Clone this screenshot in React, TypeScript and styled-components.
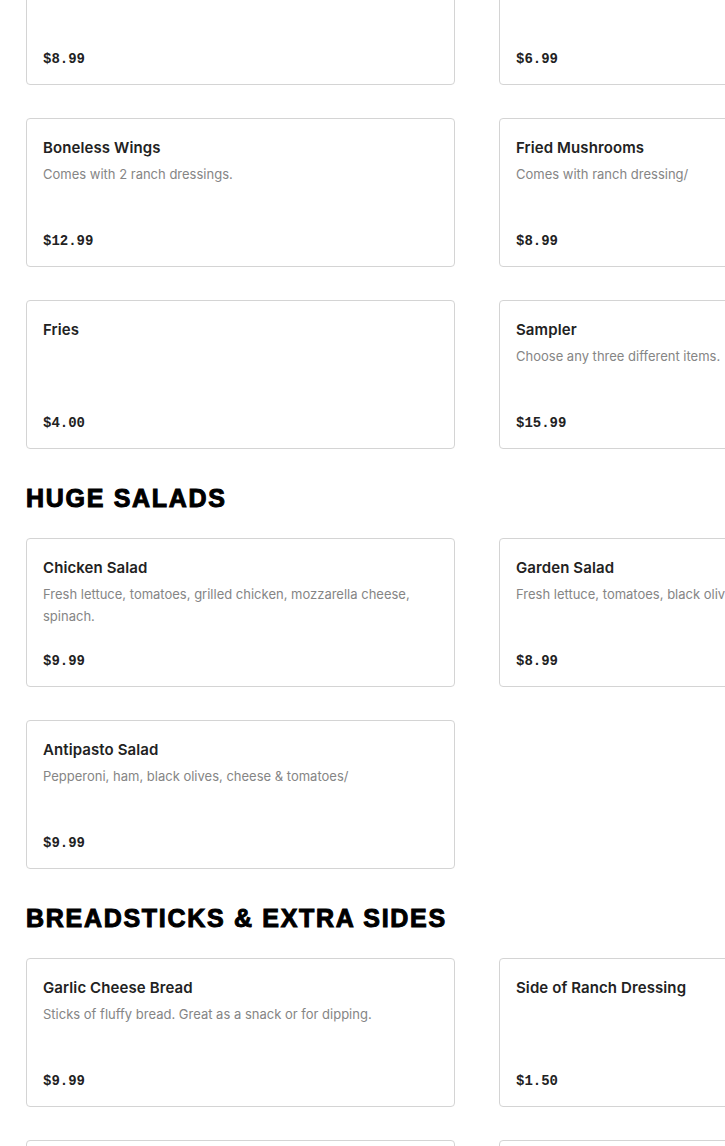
import styled, { createGlobalStyle } from "styled-components";

const GlobalStyle = createGlobalStyle`
  html, body {
    margin: 0;
    padding: 0;
    background: #fff;
  }
  body {
    font-family: Inter, "Liberation Sans", sans-serif;
    color: #222;
  }
`;

const Page = styled.div`
  width: 100vw;
  height: 1146px;
  overflow: hidden;
`;

// the page is seen scrolled part-way down the menu
const Menu = styled.main`
  margin-top: -64px;
  padding-left: 26px;
`;

const Section = styled.section``;

const SectionTitle = styled.h2`
  margin: 34px 0 25px;
  font-family: "Liberation Sans", Arial, sans-serif;
  font-size: 25px;
  line-height: 30px;
  font-weight: 900;
  letter-spacing: 1.7px;
  -webkit-text-stroke: 1px #000;
  color: #000;
  text-transform: uppercase;
  white-space: nowrap;
`;

const Grid = styled.div`
  display: grid;
  grid-template-columns: repeat(2, 429px);
  column-gap: 44px;
  row-gap: 33px;
`;

const Card = styled.article`
  box-sizing: border-box;
  height: 149px;
  display: flex;
  flex-direction: column;
  padding: 18px 16px 14px;
  border: 1px solid #d4d4d4;
  border-radius: 4px;
  background: #fff;
`;

const ItemName = styled.h3`
  margin: 0;
  font-size: 15px;
  line-height: 22px;
  font-weight: 600;
  letter-spacing: 0.1px;
  color: #222;
  white-space: nowrap;
`;

const ItemDesc = styled.p`
  margin: 4px 0 0;
  font-size: 13px;
  line-height: 22px;
  color: #858585;
`;

const Price = styled.span`
  margin-top: auto;
  font-family: "Liberation Mono", "DejaVu Sans Mono", monospace;
  font-size: 14px;
  line-height: 22px;
  font-weight: 700;
  color: #222;
`;

type Item = { name: string; desc?: string; price: string };
type MenuSection = { title?: string; items: Item[] };

const sections: MenuSection[] = [
  {
    items: [
      { name: "Mozzarella Sticks", price: "$8.99" },
      { name: "Onion Rings", desc: "Comes with marinara sauce on the side.", price: "$6.99" },
      { name: "Boneless Wings", desc: "Comes with 2 ranch dressings.", price: "$12.99" },
      { name: "Fried Mushrooms", desc: "Comes with ranch dressing/", price: "$8.99" },
      { name: "Fries", price: "$4.00" },
      { name: "Sampler", desc: "Choose any three different items.", price: "$15.99" },
    ],
  },
  {
    title: "Huge Salads",
    items: [
      {
        name: "Chicken Salad",
        desc: "Fresh lettuce, tomatoes, grilled chicken, mozzarella cheese, spinach.",
        price: "$9.99",
      },
      { name: "Garden Salad", desc: "Fresh lettuce, tomatoes, black olives, cucumbers.", price: "$8.99" },
      { name: "Antipasto Salad", desc: "Pepperoni, ham, black olives, cheese & tomatoes/", price: "$9.99" },
    ],
  },
  {
    title: "Breadsticks & Extra Sides",
    items: [
      { name: "Garlic Cheese Bread", desc: "Sticks of fluffy bread. Great as a snack or for dipping.", price: "$9.99" },
      { name: "Side of Ranch Dressing", price: "$1.50" },
      { name: "Breadsticks", desc: "Served with marinara sauce.", price: "$5.99" },
      { name: "Side of Marinara", price: "$1.00" },
    ],
  },
];

const App = () => {
  return (
    <Page>
      <GlobalStyle />
      <Menu>
        {sections.map((section, i) => (
          <Section key={i}>
            {section.title && <SectionTitle>{section.title}</SectionTitle>}
            <Grid>
              {section.items.map((item) => (
                <Card key={item.name}>
                  <ItemName>{item.name}</ItemName>
                  {item.desc && <ItemDesc>{item.desc}</ItemDesc>}
                  <Price>{item.price}</Price>
                </Card>
              ))}
            </Grid>
          </Section>
        ))}
      </Menu>
    </Page>
  );
};

export default App;
